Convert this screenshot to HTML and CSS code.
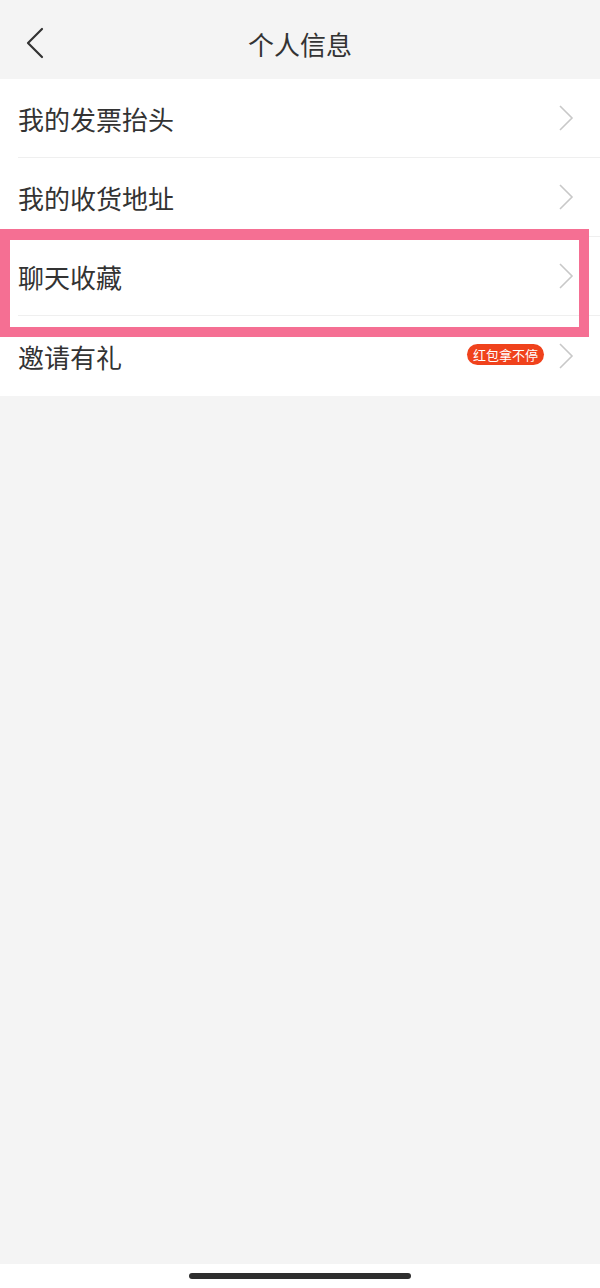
FILE: index.html
```html
<!DOCTYPE html>
<html lang="zh-CN">
<head>
<meta charset="utf-8">
<title>个人信息</title>
<link rel="stylesheet" href="styles.css">
</head>
<body>
<div class="screen">
  <header class="nav">
    <span class="back">
      <svg width="20" height="32" viewBox="0 0 20 32"><path d="M17 2 L3 16 L17 30" fill="none" stroke="#333" stroke-width="2.2" stroke-linecap="round" stroke-linejoin="round"/></svg>
    </span>
    <h1 class="title">个人信息</h1>
  </header>
  <ul class="list">
    <li class="row"><span class="label">我的发票抬头</span><span class="right"><svg class="chev" width="16" height="26" viewBox="0 0 16 26"><path d="M2 1 L14 13 L2 25" fill="none" stroke="#c8c8c8" stroke-width="1.6"/></svg></span></li>
    <li class="row"><span class="label">我的收货地址</span><span class="right"><svg class="chev" width="16" height="26" viewBox="0 0 16 26"><path d="M2 1 L14 13 L2 25" fill="none" stroke="#c8c8c8" stroke-width="1.6"/></svg></span></li>
    <li class="row"><span class="label">聊天收藏</span><span class="right"><svg class="chev" width="16" height="26" viewBox="0 0 16 26"><path d="M2 1 L14 13 L2 25" fill="none" stroke="#c8c8c8" stroke-width="1.6"/></svg></span></li>
    <li class="row"><span class="label">邀请有礼</span><span class="right"><span class="badge">红包拿不停</span><svg class="chev" width="16" height="26" viewBox="0 0 16 26"><path d="M2 1 L14 13 L2 25" fill="none" stroke="#c8c8c8" stroke-width="1.6"/></svg></span></li>
  </ul>
  <div class="highlight"></div>
  <div class="fill"></div>
  <footer class="home"><span class="indicator"></span></footer>
</div>
</body>
</html>
```
FILE: styles.css
```css
* { box-sizing: border-box; }
html, body { margin: 0; padding: 0; }
body {
  background: #f4f4f4;
  font-family: "Noto Sans CJK SC", "Noto Sans", sans-serif;
  color: #333;
}
.screen {
  position: relative;
  width: 600px;
  height: 1288px;
  display: flex;
  flex-direction: column;
  overflow: hidden;
}
.nav {
  height: 79px;
  display: flex;
  align-items: center;
  justify-content: center;
  position: relative;
  background: #f4f4f4;
}
.back {
  position: absolute;
  left: 25px;
  top: 27px;
  display: flex;
}
.title {
  margin: 0;
  font-size: 26px;
  font-weight: 400;
  color: #333;
  line-height: 1;
  margin-top: 8px;
}
.list {
  list-style: none;
  margin: 0;
  padding: 0;
  background: #fff;
}
.row {
  height: 79px;
  margin-left: 18px;
  padding-right: 26px;
  display: flex;
  align-items: center;
  justify-content: space-between;
  border-bottom: 1px solid #efefef;
}
.row:last-child { border-bottom: none; height: 80px; }
.label {
  font-size: 26px;
  line-height: 1;
  color: #333;
  margin-top: 2px;
}
.right {
  display: flex;
  align-items: center;
  gap: 14px;
}
.chev { display: block; }
.badge {
  background: #f0421c;
  color: #fff;
  font-size: 13px;
  line-height: 21px;
  height: 21px;
  padding: 0 6px;
  border-radius: 11px;
  margin-top: -3px;
}
.highlight {
  position: absolute;
  left: 0;
  top: 229px;
  width: 589px;
  height: 108px;
  border: 10px solid #f56f93;
  border-top-width: 11px;
  pointer-events: none;
}
.fill { flex: 1; background: #f4f4f4; }
.home {
  height: 24px;
  background: #fff;
  display: flex;
  justify-content: center;
  padding-top: 9px;
}
.indicator {
  width: 222px;
  height: 6px;
  border-radius: 3px;
  background: #2e2e2e;
}
```
